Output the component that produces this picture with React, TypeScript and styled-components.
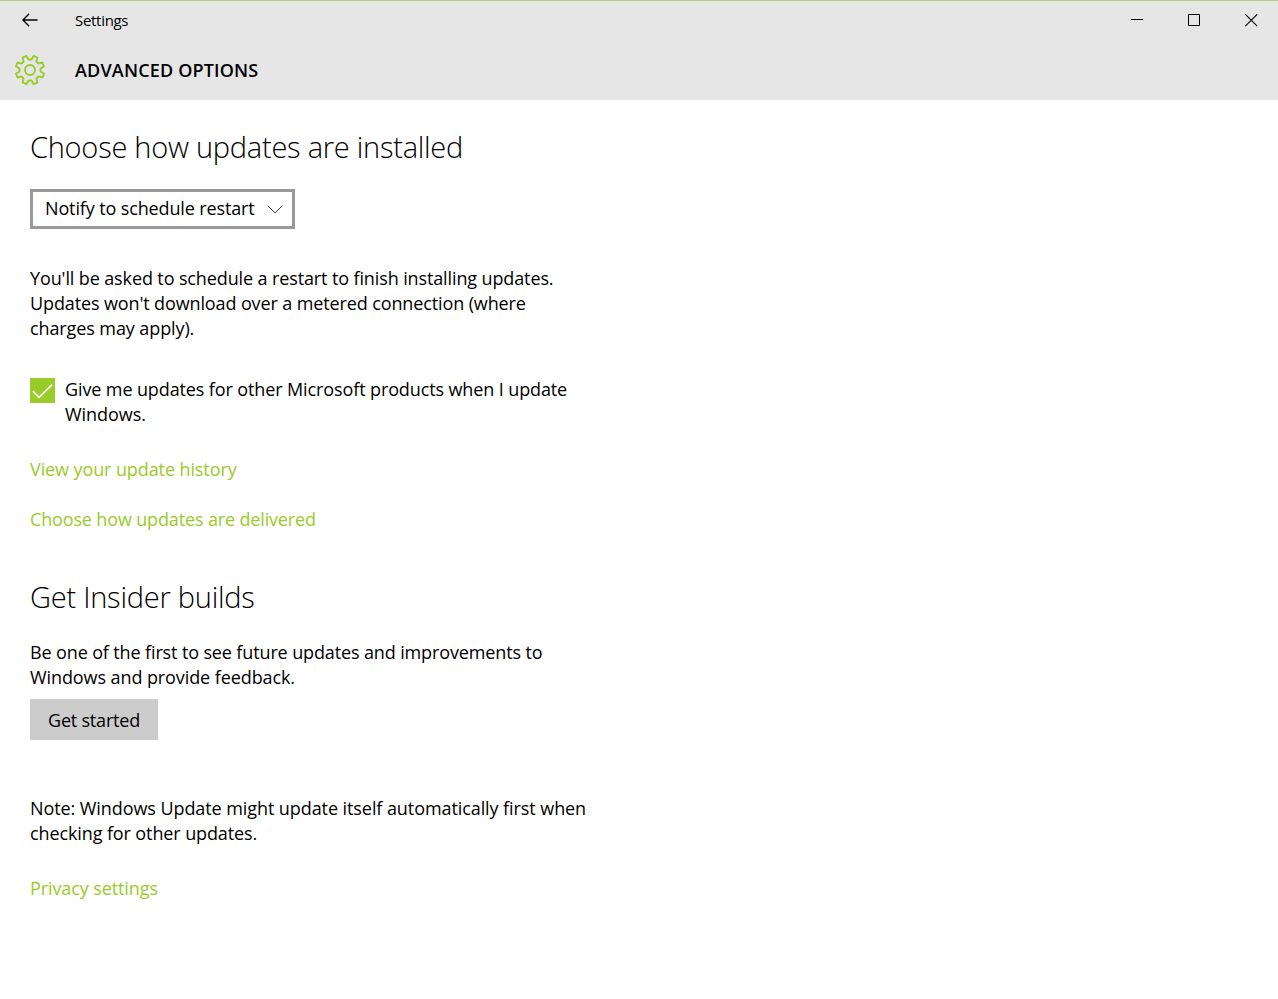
import { ReactNode } from "react";
import styled, { createGlobalStyle } from "styled-components";

const GlobalStyle = createGlobalStyle`
  * {
    box-sizing: border-box;
  }
  body {
    margin: 0;
    background-color: #ffffff;
    color: #000000;
    font-family: "Open Sans", "Noto Sans", sans-serif;
    font-size: 18px;
    line-height: 25px;
  }
`;

const Window = styled.div`
  height: 999px;
  overflow: hidden;
`;

const Top = styled.header`
  height: 100px;
  background-color: #e6e6e6;
  border-top: 1px solid #b0cf7c;
`;

const TitleBar = styled.div`
  display: flex;
  align-items: center;
  height: 39px;
  margin-right: -2px;
`;

const BackButton = styled.button`
  display: flex;
  justify-content: center;
  align-items: center;
  width: 60px;
  height: 39px;
  padding: 0 1px 2px 0;
  border: none;
  background: none;
`;

const WindowTitle = styled.span`
  flex: 1;
  padding-left: 15px;
  font-size: 15px;
`;

const WindowButton = styled.button`
  display: flex;
  justify-content: center;
  align-items: center;
  width: 57px;
  height: 39px;
  padding: 0;
  border: none;
  background: none;
`;

const PageBar = styled.div`
  display: flex;
  align-items: center;
  height: 60px;
  padding-left: 14px;
`;

const PageTitle = styled.h1`
  margin: 0 0 0 29px;
  font-size: 18px;
  font-weight: 600;
`;

const Content = styled.main`
  display: flex;
  flex-direction: column;
  align-items: flex-start;
  padding: 27px 30px 0;
`;

const Heading = styled.h2`
  margin: 0;
  font-size: 29px;
  font-weight: 320;
  line-height: 40px;
`;

const Select = styled.button`
  display: flex;
  justify-content: space-between;
  align-items: center;
  width: 265px;
  height: 40px;
  margin: 22px 0 37px;
  padding: 0 9px 2px 12px;
  border: 3px solid #999999;
  background-color: #ffffff;
  color: #000000;
  font: inherit;
  svg {
    margin-top: 2px;
  }
`;

const Paragraph = styled.p`
  margin: 0;
`;

const Line = styled.span<{ $tracking?: number }>`
  display: block;
  white-space: nowrap;
  letter-spacing: ${(props) => props.$tracking ?? 0}px;
`;

const CheckRow = styled.label`
  display: flex;
  align-items: flex-start;
  gap: 10px;
  margin: 36px 0 30px;
`;

const CheckBox = styled.span`
  width: 25px;
  height: 25px;
  margin-top: 0.5px;
  background-color: #99cc29;
  svg {
    display: block;
  }
`;

const TextLink = styled.a`
  margin-bottom: 25px;
  color: #99cc29;
  text-decoration: none;
`;

const Insider = styled.section`
  margin: 20px 0 56px;
`;

const InsiderText = styled.div`
  margin: 23px 0 9px;
`;

const Button = styled.button`
  display: flex;
  justify-content: center;
  align-items: center;
  width: 128px;
  height: 41px;
  padding: 2px 0 0;
  border: none;
  background-color: #cccccc;
  color: #000000;
  font: inherit;
`;

const Note = styled.div`
  margin-bottom: 30px;
`;

// outline of a cog with rounded corners, drawn round 0,0
function gearPath(teeth: number, outer: number, inner: number) {
  const step = (Math.PI * 2) / teeth;
  const points: string[] = [];
  for (let i = 0; i < teeth; i++) {
    const middle = (i + 0.5) * step - Math.PI / 2;
    const corners = [
      [inner, -0.32],
      [outer, -0.19],
      [outer, 0.19],
      [inner, 0.32],
    ];
    corners.forEach(([radius, shift]) => {
      const angle = middle + shift * step;
      points.push(`${(radius * Math.cos(angle)).toFixed(2)} ${(radius * Math.sin(angle)).toFixed(2)}`);
    });
  }
  return `M${points.join("L")}Z`;
}

function Gear() {
  return (
    <svg width="32" height="32" viewBox="-16 -16 32 32" fill="none" stroke="#99cc29" strokeWidth="1.9" strokeLinejoin="round">
      <path d={gearPath(8, 14.5, 10.6)} />
      <circle r="5" />
    </svg>
  );
}

interface TextProps {
  tracking?: number;
  children: ReactNode;
}

function Text({ tracking, children }: TextProps) {
  return <Line $tracking={tracking}>{children}</Line>;
}

function App() {
  return (
    <Window>
      <GlobalStyle />
      <Top>
        <TitleBar>
          <BackButton aria-label="Back">
            <svg width="16" height="14" viewBox="0 0 16 14" fill="none" stroke="#000" strokeWidth="1.3">
              <path d="M15.5 7H1M7.2 .7L.9 7L7.2 13.3" />
            </svg>
          </BackButton>
          <WindowTitle><Text tracking={-0.3}>Settings</Text></WindowTitle>
          <WindowButton aria-label="Minimize">
            <svg width="13" height="13" stroke="#000">
              <path d="M0 5.5H12" />
            </svg>
          </WindowButton>
          <WindowButton aria-label="Maximize">
            <svg width="13" height="13" fill="none" stroke="#000">
              <path d="M.5 .5H11.5V11.5H.5Z" />
            </svg>
          </WindowButton>
          <WindowButton aria-label="Close">
            <svg width="13" height="13" stroke="#000" strokeWidth="1.1">
              <path d="M.3 .3L12.2 12.2M12.2 .3L.3 12.2" />
            </svg>
          </WindowButton>
        </TitleBar>
        <PageBar>
          <Gear />
          <PageTitle><Text tracking={0.17}>ADVANCED OPTIONS</Text></PageTitle>
        </PageBar>
      </Top>
      <Content>
        <Heading><Text tracking={-0.25}>Choose how updates are installed</Text></Heading>
        <Select>
          <Text tracking={-0.13}>Notify to schedule restart</Text>
          <svg width="16" height="9" viewBox="0 0 16 9" fill="none" stroke="#444">
            <path d="M.7 .7L8 8L15.3 .7" />
          </svg>
        </Select>
        <Paragraph>
          <Text tracking={-0.12}>You'll be asked to schedule a restart to finish installing updates.</Text>
          <Text tracking={-0.12}>Updates won't download over a metered connection (where</Text>
          <Text tracking={-0.1}>charges may apply).</Text>
        </Paragraph>
        <CheckRow>
          <CheckBox>
            <svg width="25" height="25" fill="none" stroke="#fff" strokeWidth="1.7">
              <path d="M2.8 13.2L9 19.4L22.2 6.6" />
            </svg>
          </CheckBox>
          <Paragraph>
            <Text tracking={-0.115}>Give me updates for other Microsoft products when I update</Text>
            <Text tracking={-0.06}>Windows.</Text>
          </Paragraph>
        </CheckRow>
        <TextLink><Text tracking={-0.1}>View your update history</Text></TextLink>
        <TextLink><Text tracking={-0.15}>Choose how updates are delivered</Text></TextLink>
        <Insider>
          <Heading><Text tracking={-0.24}>Get Insider builds</Text></Heading>
          <InsiderText>
            <Text tracking={-0.13}>Be one of the first to see future updates and improvements to</Text>
            <Text tracking={-0.09}>Windows and provide feedback.</Text>
          </InsiderText>
          <Button><Text tracking={-0.2}>Get started</Text></Button>
        </Insider>
        <Note>
          <Text tracking={-0.08}>Note: Windows Update might update itself automatically first when</Text>
          <Text tracking={-0.11}>checking for other updates.</Text>
        </Note>
        <TextLink><Text tracking={-0.1}>Privacy settings</Text></TextLink>
      </Content>
    </Window>
  );
}

export default App;
